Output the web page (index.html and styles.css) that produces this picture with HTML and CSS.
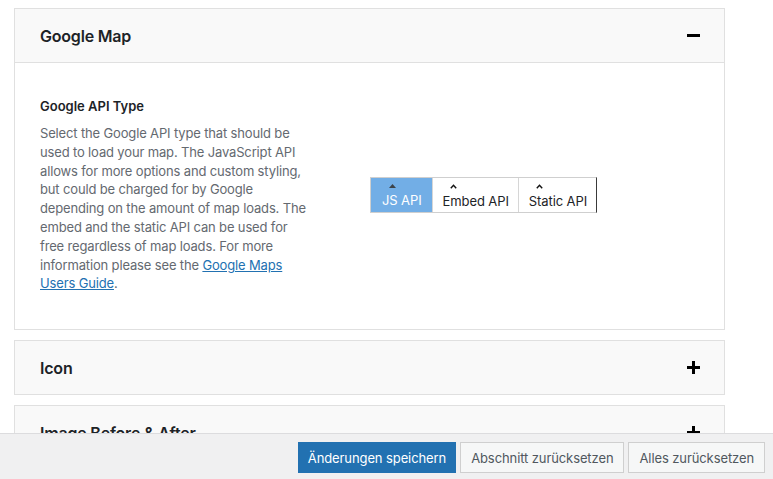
FILE: index.html
```html
<!DOCTYPE html>
<html lang="de">
<head>
    <meta charset="UTF-8">
    <meta name="viewport" content="width=device-width, initial-scale=1.0">
    <title>Einstellungen</title>
    <link rel="stylesheet" href="styles.css">
</head>
<body>
    <div class="sections">
        <div class="section open">
            <div class="section-head">
                <h2>Google Map</h2>
                <span class="toggle minus"></span>
            </div>
            <div class="section-body">
                <div class="field-info">
                    <h4>Google API Type</h4>
                    <p>Select the Google API type that should be used to load your map. The JavaScript API allows for more options and custom styling, but could be charged for by Google depending on the amount of map loads. The embed and the static API can be used for free regardless of map loads. For more information please see the <a href="#">Google Maps Users Guide</a>.</p>
                </div>
                <div class="field-input">
                    <div class="buttonset">
                        <label class="opt active">
                            <svg class="caret" width="7" height="4" viewBox="0 0 7 4"><path d="M0 4 L3.5 0 L7 4 Z" fill="#3c434a"/></svg>
                            <span>JS API</span>
                        </label>
                        <label class="opt">
                            <svg class="caret" width="7" height="5" viewBox="0 0 7 5"><path d="M0.8 4.2 L3.5 1.2 L6.2 4.2" fill="none" stroke="#111" stroke-width="1.4"/></svg>
                            <span>Embed API</span>
                        </label>
                        <label class="opt">
                            <svg class="caret" width="7" height="5" viewBox="0 0 7 5"><path d="M0.8 4.2 L3.5 1.2 L6.2 4.2" fill="none" stroke="#111" stroke-width="1.4"/></svg>
                            <span>Static API</span>
                        </label>
                    </div>
                </div>
            </div>
        </div>

        <div class="section">
            <div class="section-head">
                <h2>Icon</h2>
                <span class="toggle plus"></span>
            </div>
        </div>

        <div class="section">
            <div class="section-head">
                <h2>Image Before &amp; After</h2>
                <span class="toggle plus"></span>
            </div>
        </div>
    </div>

    <div class="save-bar">
        <button class="btn primary">Änderungen speichern</button>
        <button class="btn">Abschnitt zurücksetzen</button>
        <button class="btn">Alles zurücksetzen</button>
    </div>
</body>
</html>
```

FILE: styles.css
```css
body {
    margin: 0;
    background: #fff;
    font-family: Inter, "Noto Sans", sans-serif;
    font-size: 13px;
    color: #1d2327;
}
.sections {
    padding: 8px 48px 0 14px;
    height: 471px;
    overflow: hidden;
}
.section {
    border: 1px solid #e0e0e0;
    margin-bottom: 10px;
    background: #fff;
}
.section-head {
    height: 53px;
    padding: 0 24px 0 25px;
    display: flex;
    align-items: center;
    justify-content: space-between;
    background: #f9f9f9;
}
.section.open .section-head {
    border-bottom: 1px solid #e0e0e0;
}
.section-head h2 {
    margin: 0;
    font-size: 16px;
    font-weight: 600;
    letter-spacing: -0.2px;
    color: #1d2327;
}
.toggle {
    position: relative;
    width: 13px;
    height: 13px;
}
.toggle::before,
.toggle::after {
    content: "";
    position: absolute;
    background: #000;
}
.toggle::before {
    left: 0;
    top: 5px;
    width: 13px;
    height: 3px;
}
.plus::after {
    left: 5px;
    top: 0;
    width: 3px;
    height: 13px;
}
.section-body {
    display: flex;
    align-items: center;
    padding: 34px 25px 36px;
}
.field-info {
    width: 272px;
    flex-shrink: 0;
}
.field-info h4 {
    margin: 0 0 8px;
    font-size: 13px;
    font-weight: 600;
    line-height: 19px;
    color: #1d2327;
}
.field-info p {
    margin: 0;
    line-height: 18.8px;
    color: #646970;
    letter-spacing: -0.15px;
}
.field-info a {
    color: #2271b1;
}
.field-input {
    padding-left: 58px;
}
.buttonset {
    display: flex;
    border: 1px solid #cfcfcf;
    border-right-color: #3a3a3a;
}
.opt {
    display: flex;
    flex-direction: column;
    align-items: flex-start;
    padding: 3px 9px 2px 10px;
    background: #fff;
    border-left: 1px solid #d6d6d6;
    color: #1d2327;
    font-size: 13px;
    line-height: 17px;
    letter-spacing: -0.1px;
}
.opt:first-child {
    border-left: none;
    padding: 3px 10px 2px 11px;
}
.opt .caret {
    margin: 3px 0 4px 7px;
}
.opt.active {
    background: #72aee6;
    color: #fff;
}
.save-bar {
    position: fixed;
    left: 0;
    right: 0;
    bottom: 0;
    height: 46px;
    padding: 8px 8px 0 0;
    box-sizing: border-box;
    display: flex;
    justify-content: flex-end;
    align-items: flex-start;
    gap: 4px;
    background: #f0f0f1;
    border-top: 1px solid #dcdcde;
}
.btn {
    height: 31px;
    padding: 0 10px;
    border: 1px solid #cfcfcf;
    border-radius: 0;
    background: #f6f7f7;
    color: #50575e;
    font-family: Inter, "Noto Sans", sans-serif;
    font-size: 13px;
    letter-spacing: -0.1px;
    cursor: pointer;
}
.btn.primary {
    background: #2271b1;
    border-color: #2271b1;
    color: #fff;
    padding: 0 9px;
}
```
